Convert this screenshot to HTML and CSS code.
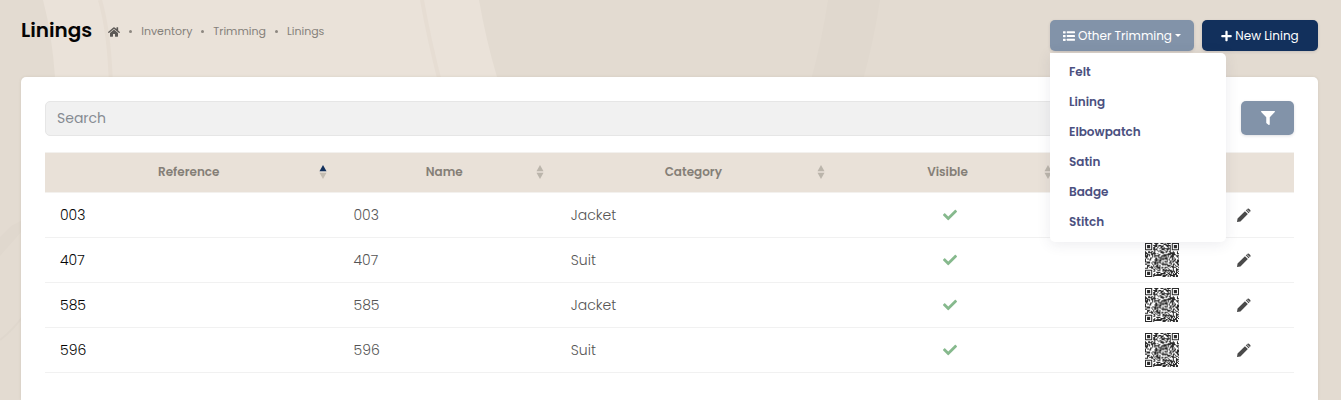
FILE: index.html
```html
<!DOCTYPE html>
<html lang="en">
<head>
<meta charset="utf-8">
<title>Linings</title>
<link rel="stylesheet" href="styles.css">
</head>
<body>
<svg width="0" height="0" class="sprite" aria-hidden="true">
  <symbol id="home" viewBox="0 0 576 512"><path d="M280.37 148.26L96 300.11V464a16 16 0 0 0 16 16l112.06-.29a16 16 0 0 0 15.92-16V368a16 16 0 0 1 16-16h64a16 16 0 0 1 16 16v95.64a16 16 0 0 0 16 16.05L464 480a16 16 0 0 0 16-16V300L295.67 148.26a12.19 12.19 0 0 0-15.3 0zM571.6 251.47L488 182.56V44.05a12 12 0 0 0-12-12h-56a12 12 0 0 0-12 12v72.61L318.47 43a48 48 0 0 0-61 0L4.34 251.47a12 12 0 0 0-1.6 16.9l25.5 31A12 12 0 0 0 45.15 301l235.22-193.74a12.19 12.19 0 0 1 15.3 0L530.9 301a12 12 0 0 0 16.9-1.6l25.5-31a12 12 0 0 0-1.7-16.93z"/></symbol>
  <symbol id="list" viewBox="0 0 512 512"><rect x="0" y="48" width="112" height="96" rx="16"/><rect x="0" y="208" width="112" height="96" rx="16"/><rect x="0" y="368" width="112" height="96" rx="16"/><rect x="160" y="56" width="352" height="80" rx="16"/><rect x="160" y="216" width="352" height="80" rx="16"/><rect x="160" y="376" width="352" height="80" rx="16"/></symbol>
  <symbol id="plus" viewBox="0 0 448 512"><path d="M416 208H272V64c0-17.67-14.33-32-32-32h-32c-17.67 0-32 14.33-32 32v144H32c-17.67 0-32 14.33-32 32v32c0 17.67 14.33 32 32 32h144v144c0 17.67 14.33 32 32 32h32c17.67 0 32-14.33 32-32V304h144c17.67 0 32-14.33 32-32v-32c0-17.67-14.33-32-32-32z"/></symbol>
  <symbol id="filter" viewBox="0 0 512 512"><path d="M487.976 0H24.028C2.71 0-8.047 25.866 7.058 40.971L192 225.941V432c0 7.831 3.821 15.17 10.237 19.662l80 55.98C298.02 518.69 320 507.493 320 487.98V225.941l184.947-184.97C520.021 25.896 509.338 0 487.976 0z"/></symbol>
  <symbol id="check" viewBox="0 0 512 512"><path d="M173.898 439.404l-166.4-166.4c-9.997-9.997-9.997-26.206 0-36.204l36.203-36.204c9.997-9.998 26.207-9.998 36.204 0L192 312.69 432.095 72.596c9.997-9.997 26.207-9.997 36.204 0l36.203 36.204c9.997 9.997 9.997 26.206 0 36.204l-294.4 294.401c-9.998 9.997-26.207 9.997-36.204-.001z"/></symbol>
  <symbol id="pen" viewBox="0 0 512 512"><path d="M0 512L20 385L290 115L397 222L127 492zM320 86L350 56L456 162L426 192zM374 32Q405 0 436 30L484 76Q512 106 482 137L470 148L364 42z"/></symbol>
  <symbol id="sort" viewBox="0 0 8 14"><path class="up" d="M4 0L7.5 6.3H.5z"/><path class="down" d="M4 14L.5 7.7H7.5z"/></symbol>
  <symbol id="sort-up" viewBox="0 0 8 14"><path fill="#12305c" d="M4 0L7.5 6.3H.5z"/><path fill="#c3bcb1" d="M4 14L.5 7.7H7.5z"/></symbol>
  <symbol id="qr" viewBox="0 0 33 33"><path id="qr-modules" fill="#2b2b2b" d=""/></symbol>
</svg>

<svg class="backdrop" width="1341" height="400" aria-hidden="true">
  <path fill="#eae2d9" d="M43 0Q52 34 55 77V110H506L497 77Q486 40 479 0z"/>
  <path fill="none" stroke="#e6ddd3" stroke-width="4" d="M100 0Q110 35 111 90M422 0Q429 40 442 90"/>
  <path fill="#e0d8ce" d="M828 0H880Q874 40 863 80H811Q822 40 828 0zM0 237L11 226L30 216V222L0 256z"/>
  <path fill="none" stroke="#dfd7cd" stroke-width="2" d="M0 340Q12 331 24 315"/>
</svg>

<main class="page">
  <header class="topbar">
    <h1>Linings</h1>
    <nav class="crumbs" aria-label="Breadcrumb">
      <a href="#" aria-label="Home"><svg class="icon home"><use href="#home"/></svg></a>
      <i></i><a href="#">Inventory</a>
      <i></i><a href="#">Trimming</a>
      <i></i><a href="#">Linings</a>
    </nav>
    <div class="actions">
      <div class="dropdown">
        <button class="btn muted toggle" type="button" aria-expanded="true"><svg class="icon"><use href="#list"/></svg>Other Trimming<span class="caret"></span></button>
        <ul class="menu">
          <li><a href="#">Felt</a></li>
          <li><a href="#">Lining</a></li>
          <li><a href="#">Elbowpatch</a></li>
          <li><a href="#">Satin</a></li>
          <li><a href="#">Badge</a></li>
          <li><a href="#">Stitch</a></li>
        </ul>
      </div>
      <button class="btn primary" type="button"><svg class="icon plus"><use href="#plus"/></svg>New Lining</button>
    </div>
  </header>

  <section class="card">
    <div class="tools">
      <input class="search" type="text" placeholder="Search" aria-label="Search">
      <button class="btn muted filter" type="button" aria-label="Filter"><svg class="icon"><use href="#filter"/></svg></button>
    </div>
    <table>
      <colgroup><col class="c-ref"><col class="c-name"><col class="c-cat"><col class="c-vis"><col class="c-qr"><col class="c-edit"></colgroup>
      <thead>
        <tr>
          <th><div class="head"><span>Reference</span><svg class="sort"><use href="#sort-up"/></svg></div></th>
          <th><div class="head"><span>Name</span><svg class="sort"><use href="#sort"/></svg></div></th>
          <th><div class="head"><span>Category</span><svg class="sort"><use href="#sort"/></svg></div></th>
          <th><div class="head"><span>Visible</span><svg class="sort"><use href="#sort"/></svg></div></th>
          <th></th>
          <th></th>
        </tr>
      </thead>
      <tbody>
        <tr><td class="ref">003</td><td>003</td><td>Jacket</td><td class="mid"><svg class="check"><use href="#check"/></svg></td><td class="code"><svg class="qr"><use href="#qr"/></svg></td><td class="mid"><a href="#" aria-label="Edit 003"><svg class="pen"><use href="#pen"/></svg></a></td></tr>
        <tr><td class="ref">407</td><td>407</td><td>Suit</td><td class="mid"><svg class="check"><use href="#check"/></svg></td><td class="code"><svg class="qr"><use href="#qr"/></svg></td><td class="mid"><a href="#" aria-label="Edit 407"><svg class="pen"><use href="#pen"/></svg></a></td></tr>
        <tr><td class="ref">585</td><td>585</td><td>Jacket</td><td class="mid"><svg class="check"><use href="#check"/></svg></td><td class="code"><svg class="qr"><use href="#qr"/></svg></td><td class="mid"><a href="#" aria-label="Edit 585"><svg class="pen"><use href="#pen"/></svg></a></td></tr>
        <tr><td class="ref">596</td><td>596</td><td>Suit</td><td class="mid"><svg class="check"><use href="#check"/></svg></td><td class="code"><svg class="qr"><use href="#qr"/></svg></td><td class="mid"><a href="#" aria-label="Edit 596"><svg class="pen"><use href="#pen"/></svg></a></td></tr>
      </tbody>
    </table>
  </section>
</main>
<script src="qr.js"></script>
</body>
</html>
```
FILE: styles.css
```css
* { box-sizing: border-box; }
body {
  margin: 0;
  background: #e3dbd1;
  color: #555;
  font-family: Poppins, Inter, "Open Sans", sans-serif;
  font-size: 13px;
}
a { color: inherit; text-decoration: none; }
svg { display: block; fill: currentColor; }
.sprite { position: absolute; }
.backdrop { position: absolute; top: 0; left: 0; z-index: -1; max-width: 100%; }

.page {
  display: flex;
  flex-direction: column;
  min-height: 100vh;
  padding: 20px 23px 0 21px;
}
.topbar { display: flex; align-items: flex-start; height: 57px; }
h1 {
  margin: 0;
  color: #050505;
  font-size: 20px;
  font-weight: 600;
  line-height: 20px;
}
.crumbs {
  display: flex;
  align-items: center;
  gap: 9px;
  margin-left: 16px;
  color: #85807a;
  font-size: 11px;
  line-height: 23px;
}
.crumbs i { width: 3px; height: 3px; border-radius: 50%; background: #8d8780; }
.icon.home { width: 12px; height: 12px; color: #5c5956; }

.actions { display: flex; gap: 8px; margin-left: auto; }
.dropdown { position: relative; }
.btn {
  display: flex;
  align-items: center;
  justify-content: center;
  gap: 3px;
  height: 31px;
  padding: 0 12px;
  border: 0;
  border-radius: 5px;
  color: #fff;
  font: 400 12px/18px Poppins, Inter, "Open Sans", sans-serif;
  box-shadow: 0 1px 3px rgba(40, 40, 60, .15);
}
.muted { background: #8293a9; }
.toggle { min-width: 144px; }
.primary { min-width: 116px; background: #12305c; }
.icon { width: 12px; height: 12px; }
.icon.plus { width: 11px; height: 12px; }
.caret { border: 3px solid transparent; border-top-color: #fff; border-bottom: 0; }
.menu {
  position: absolute;
  top: 33px;
  left: 0;
  z-index: 2;
  width: 176px;
  margin: 0;
  padding: 4px 0 5px;
  list-style: none;
  background: #fff;
  border-radius: 0 5px 5px 5px;
  box-shadow: 0 2px 14px rgba(60, 60, 90, .1);
}
.menu a {
  display: block;
  padding: 0 19px;
  color: #4b5080;
  font-size: 12px;
  font-weight: 600;
  line-height: 30px;
}

.card {
  flex: 1;
  padding: 24px 24px 16px;
  background: #fff;
  border-radius: 5px 5px 0 0;
  box-shadow: 0 0 3px rgba(90, 80, 60, .12);
}
.tools { display: flex; gap: 15px; margin-bottom: 16px; }
.search {
  flex: 1;
  height: 35px;
  padding: 0 11px;
  border: 1px solid #e6e6e6;
  border-radius: 5px;
  background: #f1f1f1;
  color: #555;
  font: 14px Poppins, Inter, "Open Sans", sans-serif;
}
.search::placeholder { color: #868b91; opacity: 1; }
.filter { width: 53px; height: 34px; }
.filter .icon { width: 14px; height: 14px; }

table { width: 100%; table-layout: fixed; border-collapse: separate; border-spacing: 0; }
.c-ref { width: 23.5%; }
.c-name { width: 17.4%; }
.c-cat { width: 22.5%; }
.c-vis { width: 18.2%; }
.c-qr { width: 10.4%; }
.c-edit { width: 8%; }
th {
  height: 41px;
  padding: 0 12px 2px 14px;
  background: #e9e1d8;
  border-top: 1px solid #f3f1ee;
  border-bottom: 1px solid #f3f1ee;
  color: #857f77;
  font-size: 12px;
  font-weight: 600;
}
.head { display: flex; align-items: center; }
.head span { flex: 1; }
.sort { width: 8px; height: 14px; color: #bbb5ab; }
td {
  height: 45px;
  padding: 0 15px;
  border-bottom: 1px solid #f1f1f1;
  font-size: 14px;
  font-weight: 300;
  line-height: 20px;
}
.ref { color: #050505; }
.mid svg { margin: 0 auto; }
.check { width: 14px; height: 14px; color: #86b98d; }
.pen { width: 14px; height: 14px; color: #4a4a4a; }
.code svg { width: 34px; height: 34px; margin-left: auto; }
```
FILE: qr.js
```js
const SIZE = 33;

function finder(x, y) {
  const corners = [[0, 0], [SIZE - 7, 0], [0, SIZE - 7]];
  for (const [cx, cy] of corners) {
    const dx = x - cx, dy = y - cy;
    if (dx >= -1 && dx <= 7 && dy >= -1 && dy <= 7) {
      const ring = Math.max(Math.abs(dx - 3), Math.abs(dy - 3));
      return ring === 3 || ring <= 1;
    }
  }
  return null;
}

let seed = 4071;
let d = "";
for (let y = 0; y < SIZE; y++) {
  for (let x = 0; x < SIZE; x++) {
    seed = (seed * 1103515245 + 12345) % 2147483648;
    const fixed = finder(x, y);
    const dark = fixed === null ? seed / 2147483648 < 0.55 : fixed;
    if (dark) d += `M${x} ${y}h1v1h-1z`;
  }
}
document.getElementById("qr-modules").setAttribute("d", d);
```
